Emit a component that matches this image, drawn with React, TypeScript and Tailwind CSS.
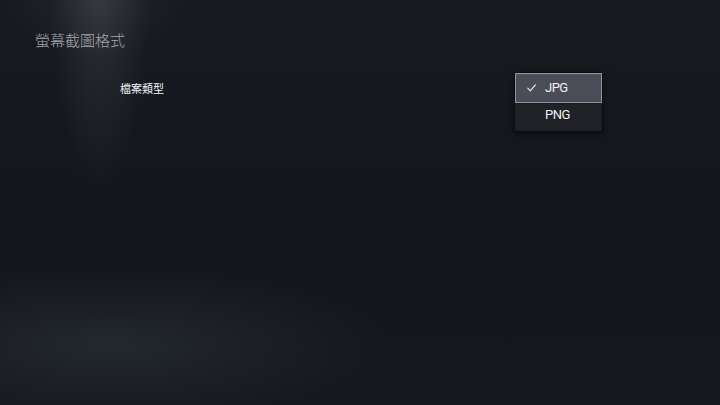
import React from "react";

const options = ["JPG", "PNG"];

function Check() {
  return (
    <svg width="9" height="8" viewBox="0 0 9 8" fill="none" className="shrink-0">
      <path d="M0.8 4.2 L3.3 6.8 L8.3 0.8" stroke="#e6e7ea" strokeWidth="1.2" strokeLinecap="round" strokeLinejoin="round" />
    </svg>
  );
}

export default function App() {
  const selected = "JPG";
  return (
    <div
      className="relative flex h-[405px] w-[720px] flex-col overflow-hidden bg-[#14171d] bg-[radial-gradient(ellipse_50px_210px_at_100px_-20px,rgba(125,130,140,0.22),transparent),radial-gradient(ellipse_90px_60px_at_95px_0px,rgba(120,124,134,0.12),transparent),radial-gradient(ellipse_280px_80px_at_110px_345px,rgba(70,77,90,0.3),transparent),linear-gradient(180deg,#171a20_0%,#13161b_60%,#15181d_100%)]"
      style={{ fontFamily: '"Noto Sans CJK TC", "Noto Sans", sans-serif' }}
    >
      <h1 className="pl-[35px] pt-[30px] text-[15px] font-light leading-[20px] text-[#a4a6ab]">
        螢幕截圖格式
      </h1>

      <div className="mt-[22px] flex items-start justify-between pl-[120px] pr-[117px]">
        <div className="flex h-[32px] items-center text-[11px] leading-none text-[#f2f3f5]">檔案類型</div>

        <div className="w-[89px] border border-[#0c0d10] bg-[#1b1d22] shadow-[0_2px_6px_rgba(0,0,0,0.5)]">
          {options.map((opt) =>
            opt === selected ? (
              <div
                key={opt}
                className="flex h-[30px] items-center border border-[#8f929a] bg-[#4a4d57] pl-[11px] shadow-[inset_0_1px_0_rgba(255,255,255,0.08)]"
              >
                <Check />
                <span className="ml-[9px] text-[13px] tracking-[-0.5px] text-[#eef0f3]" style={{ fontFamily: 'Roboto, "Noto Sans", sans-serif' }}>
                  {opt}
                </span>
              </div>
            ) : (
              <div key={opt} className="mt-px flex h-[27px] items-center bg-[#1f2126] pb-[5px] pl-[30px]">
                <span className="text-[13px] tracking-[-0.5px] text-[#eef0f3]" style={{ fontFamily: 'Roboto, "Noto Sans", sans-serif' }}>
                  {opt}
                </span>
              </div>
            )
          )}
        </div>
      </div>
    </div>
  );
}
